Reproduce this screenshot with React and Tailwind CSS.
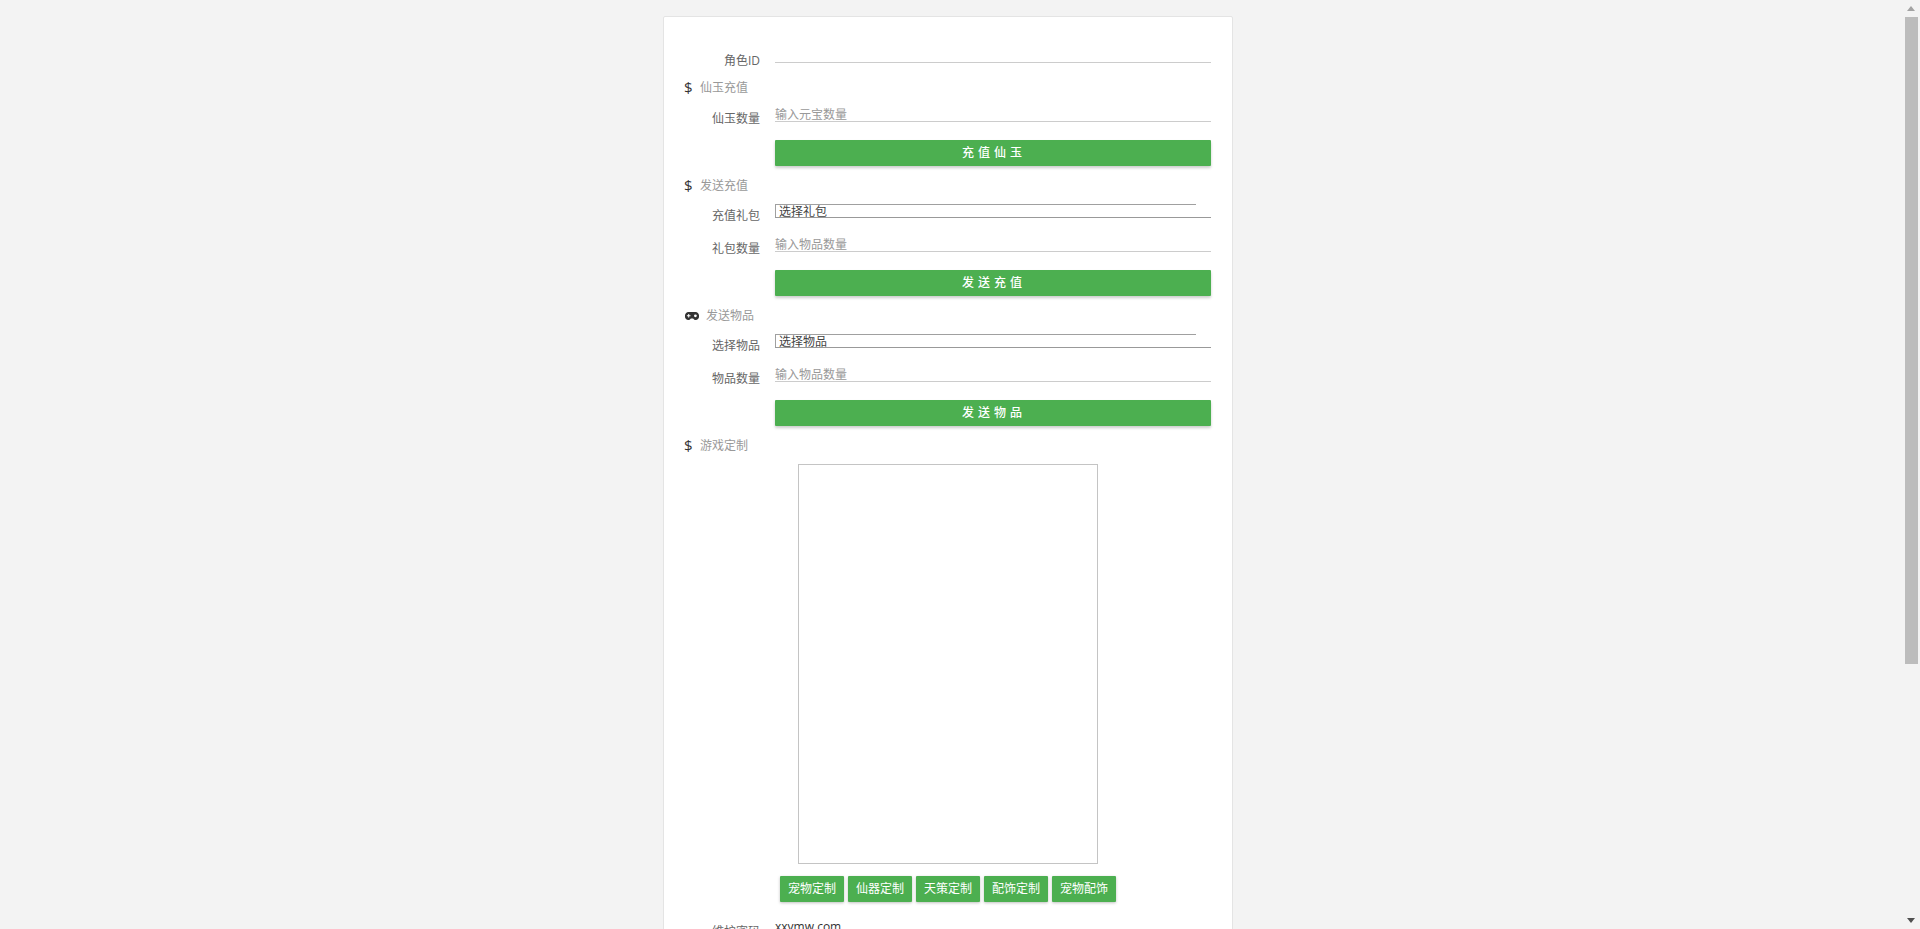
function Section({ icon, children }) {
  return (
    <div className="flex h-[30px] items-center pt-[1px]">
      <span className="flex w-[15px] justify-start text-[#333]">{icon}</span>
      <span className="text-[12px] text-[#999]">{children}</span>
    </div>
  );
}

const Dollar = (
  <span className="-ml-[1px] w-[15px] text-[15px] font-normal leading-none text-[#333]">$</span>
);

const Gamepad = (
  <svg width="14" height="8" viewBox="0 0 14 8" className="-mr-[6px] shrink-0" fill="#333">
    <path d="M3.500 0h7A3.500 3.500 0 0 1 14 3.800 3.700 3.700 0 0 1 10.600 8c-1.200 0-1.900-.7-2.500-1.500H5.900C5.300 7.300 4.600 8 3.400 8A3.700 3.700 0 0 1 0 3.800 3.500 3.500 0 0 1 3.500 0z" />
    <path d="M3.200 2h1v1.300h1.300v1H4.200v1.300h-1V4.300H1.900v-1h1.300z" fill="#fff" />
    <circle cx="10.400" cy="3.800" r="1.400" fill="#fff" />
  </svg>
);

function Label({ children }) {
  return <label className="w-[75px] shrink-0 text-right text-[12px] leading-[31px] text-[#666]">{children}</label>;
}

function InputRow({ label, placeholder, className = "" }) {
  return (
    <div className={`flex h-[30px] ${className}`}>
      <Label>{label}</Label>
      <input
        placeholder={placeholder}
        className="ml-[15px] mt-[4px] h-[15px] flex-1 border-b border-[#ccc] text-[12px] leading-[14px] text-[#555] outline-none placeholder:text-[#999]"
      />
    </div>
  );
}

function SelectRow({ label, placeholder, className = "" }) {
  return (
    <div className={`flex h-[30px] ${className}`}>
      <Label>{label}</Label>
      <div className="ml-[15px] mt-[4px] h-[14px] flex-1 border-b border-[#999]">
        <div className="flex h-[13px] w-[421px] items-center border-l border-t border-[#a0a0a0] pl-[3px] text-[12px] leading-[13px] text-[#444]">
          {placeholder}
        </div>
      </div>
    </div>
  );
}

function WideButton({ children }) {
  return (
    <div className="mt-[7px] pl-[90px]">
      <button className="block h-[26px] w-full rounded-[1px] bg-[#4caf50] pl-[2px] text-[12px] font-medium tracking-[4px] text-white shadow-[0_2px_3px_rgba(0,0,0,0.2)]">
        {children}
      </button>
    </div>
  );
}

function SmallButton({ children }) {
  return (
    <button className="block h-[26px] w-[64px] rounded-[1px] bg-[#4caf50] text-[12px] text-white shadow-[0_1px_3px_rgba(0,0,0,0.25)]">
      {children}
    </button>
  );
}

export default function App() {
  return (
    <div
      className="flex h-[929px] w-[1920px] overflow-hidden bg-[#f3f3f3]"
      style={{ fontFamily: '"Open Sans","Noto Sans CJK SC",sans-serif' }}
    >
      <main className="flex-1 overflow-hidden pl-[663px] pt-[16px]">
        <div className="h-[1000px] w-[570px] rounded-[2px] border border-[#e4e4e4] bg-white pl-[21px] pr-[21px] pt-[31px]">
          <div className="flex h-[24px]">
            <label className="w-[75px] shrink-0 text-right text-[12px] leading-[26px] text-[#666]">角色ID</label>
            <input className="ml-[15px] h-[15px] flex-1 border-b border-[#ccc] outline-none" />
          </div>
          <div className="h-[31px]">
            <Section icon={Dollar}>仙玉充值</Section>
          </div>
          <InputRow label="仙玉数量" placeholder="输入元宝数量" />
          <WideButton>充值仙玉</WideButton>

          <div className="mt-[4px]">
            <Section icon={Dollar}>发送充值</Section>
          </div>
          <SelectRow label="充值礼包" placeholder="选择礼包" />
          <InputRow label="礼包数量" placeholder="输入物品数量" className="mt-[3px]" />
          <WideButton>发送充值</WideButton>

          <div className="mt-[4px]">
            <Section icon={Gamepad}><span className="ml-[6px]">发送物品</span></Section>
          </div>
          <SelectRow label="选择物品" placeholder="选择物品" />
          <InputRow label="物品数量" placeholder="输入物品数量" className="mt-[3px]" />
          <WideButton>发送物品</WideButton>

          <div className="mt-[4px]">
            <Section icon={Dollar}>游戏定制</Section>
          </div>
          <div className="ml-[113px] mt-[4px] h-[400px] w-[300px] border border-[#c4c4c4]" />
          <div className="ml-[95px] mt-[12px] flex gap-[4px]">
            <SmallButton>宠物定制</SmallButton>
            <SmallButton>仙器定制</SmallButton>
            <SmallButton>天策定制</SmallButton>
            <SmallButton>配饰定制</SmallButton>
            <SmallButton>宠物配饰</SmallButton>
          </div>
          <div className="mt-[14px] flex h-[30px]">
            <Label>维护密码</Label>
            <span className="ml-[15px] text-[12px] leading-[21px] text-[#333]">xxymw.com</span>
          </div>
        </div>
      </main>
      <aside className="flex w-[16px] shrink-0 flex-col pr-[2px]">
        <div className="flex h-[17px] items-center justify-center">
          <svg width="8" height="5" viewBox="0 0 8 5" fill="#a3a3a3"><path d="M4 0l4 5H0z" /></svg>
        </div>
        <div className="ml-[1px] h-[647px] bg-[#bcbcbc]" />
        <div className="flex-1" />
        <div className="flex h-[17px] items-center justify-center">
          <svg width="8" height="5" viewBox="0 0 8 5" fill="#505050"><path d="M0 0h8L4 5z" /></svg>
        </div>
      </aside>
    </div>
  );
}
